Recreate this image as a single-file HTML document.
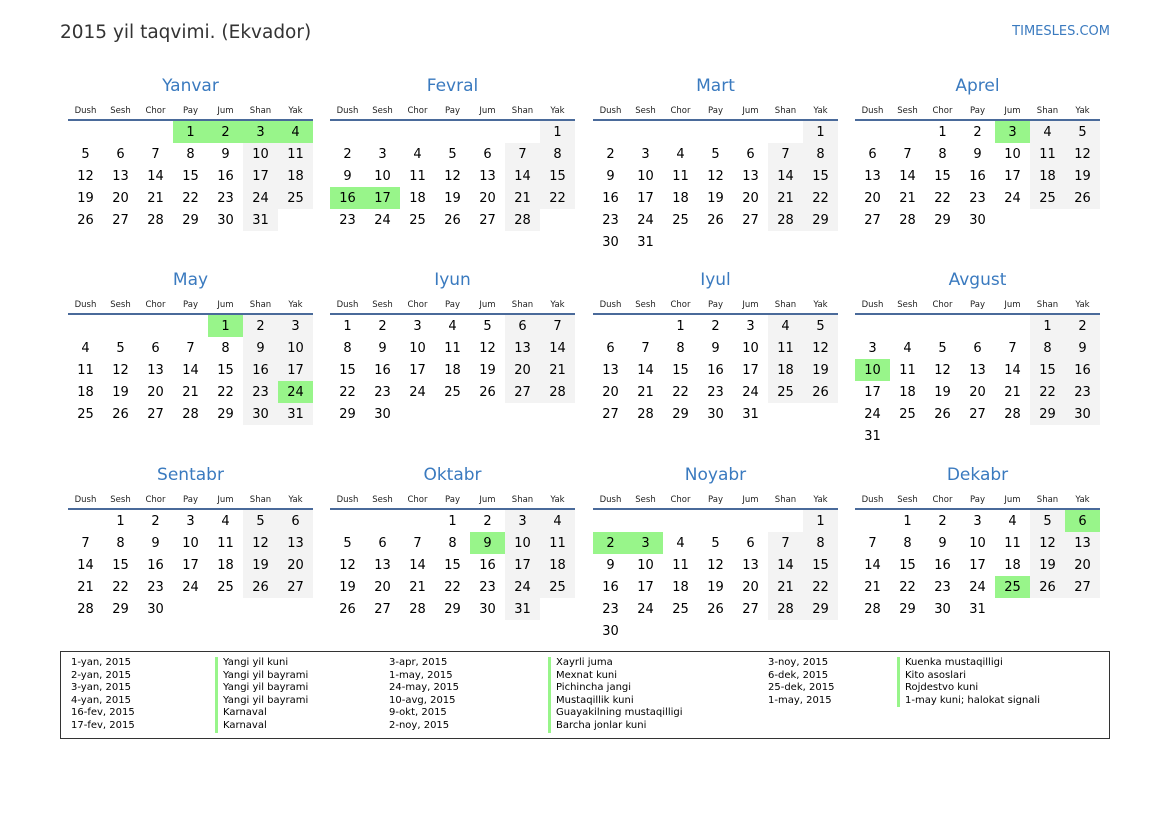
<!DOCTYPE html>
<html><head><meta charset="utf-8">
<style>
body{margin:0;width:1169px;height:827px;background:#fff;position:relative;font-family:"DejaVu Sans","Liberation Sans",sans-serif;color:#000;overflow:hidden}
.hdr{position:absolute;left:60px;top:20px;font-size:18.5px;color:#333;line-height:26px}
.site{position:absolute;right:59px;top:23px;font-size:13px;color:#3a7abf;line-height:18px}
.m{position:absolute;width:245px}
.t{height:20px;line-height:20px;text-align:center;font-size:17px;color:#3a7abf;margin-top:1px}
.d{position:absolute;top:29px;left:0;width:245px;display:flex;font-size:8.5px;line-height:14px;color:#222}
.d span{width:35px;text-align:center}
.ln{position:absolute;top:44px;left:0;width:245px;height:2px;background:#4a6a9a}
table{position:absolute;top:46px;left:0;border-collapse:collapse}
td{width:35px;height:20px;padding:2px 0 0 0;text-align:center;font-size:13px;line-height:20px}
td:nth-child(6):not(:empty),td:nth-child(7):not(:empty){background:#f3f3f3}
td.h,td.h:not(:empty){background:#98f58a}
.lg{position:absolute;left:60px;top:651px;width:1048px;height:86px;border:1px solid #333}
.c{position:absolute;top:5px;font-size:10px;line-height:12.6px;white-space:nowrap}
.b{border-left:3px solid #98f58a;padding-left:5px}
</style></head><body>
<div class="hdr">2015 yil taqvimi. (Ekvador)</div>
<div class="site">TIMESLES.COM</div>

<div class="m" style="left:68px;top:75px"><div class="t">Yanvar</div><div class="d"><span>Dush</span><span>Sesh</span><span>Chor</span><span>Pay</span><span>Jum</span><span>Shan</span><span>Yak</span></div><div class="ln"></div>
<table><tr><td></td><td></td><td></td><td class="h">1</td><td class="h">2</td><td class="h">3</td><td class="h">4</td></tr>
<tr><td>5</td><td>6</td><td>7</td><td>8</td><td>9</td><td>10</td><td>11</td></tr>
<tr><td>12</td><td>13</td><td>14</td><td>15</td><td>16</td><td>17</td><td>18</td></tr>
<tr><td>19</td><td>20</td><td>21</td><td>22</td><td>23</td><td>24</td><td>25</td></tr>
<tr><td>26</td><td>27</td><td>28</td><td>29</td><td>30</td><td>31</td><td></td></tr></table></div>

<div class="m" style="left:330px;top:75px"><div class="t">Fevral</div><div class="d"><span>Dush</span><span>Sesh</span><span>Chor</span><span>Pay</span><span>Jum</span><span>Shan</span><span>Yak</span></div><div class="ln"></div>
<table><tr><td></td><td></td><td></td><td></td><td></td><td></td><td>1</td></tr>
<tr><td>2</td><td>3</td><td>4</td><td>5</td><td>6</td><td>7</td><td>8</td></tr>
<tr><td>9</td><td>10</td><td>11</td><td>12</td><td>13</td><td>14</td><td>15</td></tr>
<tr><td class="h">16</td><td class="h">17</td><td>18</td><td>19</td><td>20</td><td>21</td><td>22</td></tr>
<tr><td>23</td><td>24</td><td>25</td><td>26</td><td>27</td><td>28</td><td></td></tr></table></div>

<div class="m" style="left:593px;top:75px"><div class="t">Mart</div><div class="d"><span>Dush</span><span>Sesh</span><span>Chor</span><span>Pay</span><span>Jum</span><span>Shan</span><span>Yak</span></div><div class="ln"></div>
<table><tr><td></td><td></td><td></td><td></td><td></td><td></td><td>1</td></tr>
<tr><td>2</td><td>3</td><td>4</td><td>5</td><td>6</td><td>7</td><td>8</td></tr>
<tr><td>9</td><td>10</td><td>11</td><td>12</td><td>13</td><td>14</td><td>15</td></tr>
<tr><td>16</td><td>17</td><td>18</td><td>19</td><td>20</td><td>21</td><td>22</td></tr>
<tr><td>23</td><td>24</td><td>25</td><td>26</td><td>27</td><td>28</td><td>29</td></tr>
<tr><td>30</td><td>31</td><td></td><td></td><td></td><td></td><td></td></tr></table></div>

<div class="m" style="left:855px;top:75px"><div class="t">Aprel</div><div class="d"><span>Dush</span><span>Sesh</span><span>Chor</span><span>Pay</span><span>Jum</span><span>Shan</span><span>Yak</span></div><div class="ln"></div>
<table><tr><td></td><td></td><td>1</td><td>2</td><td class="h">3</td><td>4</td><td>5</td></tr>
<tr><td>6</td><td>7</td><td>8</td><td>9</td><td>10</td><td>11</td><td>12</td></tr>
<tr><td>13</td><td>14</td><td>15</td><td>16</td><td>17</td><td>18</td><td>19</td></tr>
<tr><td>20</td><td>21</td><td>22</td><td>23</td><td>24</td><td>25</td><td>26</td></tr>
<tr><td>27</td><td>28</td><td>29</td><td>30</td><td></td><td></td><td></td></tr></table></div>

<div class="m" style="left:68px;top:269px"><div class="t">May</div><div class="d"><span>Dush</span><span>Sesh</span><span>Chor</span><span>Pay</span><span>Jum</span><span>Shan</span><span>Yak</span></div><div class="ln"></div>
<table><tr><td></td><td></td><td></td><td></td><td class="h">1</td><td>2</td><td>3</td></tr>
<tr><td>4</td><td>5</td><td>6</td><td>7</td><td>8</td><td>9</td><td>10</td></tr>
<tr><td>11</td><td>12</td><td>13</td><td>14</td><td>15</td><td>16</td><td>17</td></tr>
<tr><td>18</td><td>19</td><td>20</td><td>21</td><td>22</td><td>23</td><td class="h">24</td></tr>
<tr><td>25</td><td>26</td><td>27</td><td>28</td><td>29</td><td>30</td><td>31</td></tr></table></div>

<div class="m" style="left:330px;top:269px"><div class="t">Iyun</div><div class="d"><span>Dush</span><span>Sesh</span><span>Chor</span><span>Pay</span><span>Jum</span><span>Shan</span><span>Yak</span></div><div class="ln"></div>
<table><tr><td>1</td><td>2</td><td>3</td><td>4</td><td>5</td><td>6</td><td>7</td></tr>
<tr><td>8</td><td>9</td><td>10</td><td>11</td><td>12</td><td>13</td><td>14</td></tr>
<tr><td>15</td><td>16</td><td>17</td><td>18</td><td>19</td><td>20</td><td>21</td></tr>
<tr><td>22</td><td>23</td><td>24</td><td>25</td><td>26</td><td>27</td><td>28</td></tr>
<tr><td>29</td><td>30</td><td></td><td></td><td></td><td></td><td></td></tr></table></div>

<div class="m" style="left:593px;top:269px"><div class="t">Iyul</div><div class="d"><span>Dush</span><span>Sesh</span><span>Chor</span><span>Pay</span><span>Jum</span><span>Shan</span><span>Yak</span></div><div class="ln"></div>
<table><tr><td></td><td></td><td>1</td><td>2</td><td>3</td><td>4</td><td>5</td></tr>
<tr><td>6</td><td>7</td><td>8</td><td>9</td><td>10</td><td>11</td><td>12</td></tr>
<tr><td>13</td><td>14</td><td>15</td><td>16</td><td>17</td><td>18</td><td>19</td></tr>
<tr><td>20</td><td>21</td><td>22</td><td>23</td><td>24</td><td>25</td><td>26</td></tr>
<tr><td>27</td><td>28</td><td>29</td><td>30</td><td>31</td><td></td><td></td></tr></table></div>

<div class="m" style="left:855px;top:269px"><div class="t">Avgust</div><div class="d"><span>Dush</span><span>Sesh</span><span>Chor</span><span>Pay</span><span>Jum</span><span>Shan</span><span>Yak</span></div><div class="ln"></div>
<table><tr><td></td><td></td><td></td><td></td><td></td><td>1</td><td>2</td></tr>
<tr><td>3</td><td>4</td><td>5</td><td>6</td><td>7</td><td>8</td><td>9</td></tr>
<tr><td class="h">10</td><td>11</td><td>12</td><td>13</td><td>14</td><td>15</td><td>16</td></tr>
<tr><td>17</td><td>18</td><td>19</td><td>20</td><td>21</td><td>22</td><td>23</td></tr>
<tr><td>24</td><td>25</td><td>26</td><td>27</td><td>28</td><td>29</td><td>30</td></tr>
<tr><td>31</td><td></td><td></td><td></td><td></td><td></td><td></td></tr></table></div>

<div class="m" style="left:68px;top:464px"><div class="t">Sentabr</div><div class="d"><span>Dush</span><span>Sesh</span><span>Chor</span><span>Pay</span><span>Jum</span><span>Shan</span><span>Yak</span></div><div class="ln"></div>
<table><tr><td></td><td>1</td><td>2</td><td>3</td><td>4</td><td>5</td><td>6</td></tr>
<tr><td>7</td><td>8</td><td>9</td><td>10</td><td>11</td><td>12</td><td>13</td></tr>
<tr><td>14</td><td>15</td><td>16</td><td>17</td><td>18</td><td>19</td><td>20</td></tr>
<tr><td>21</td><td>22</td><td>23</td><td>24</td><td>25</td><td>26</td><td>27</td></tr>
<tr><td>28</td><td>29</td><td>30</td><td></td><td></td><td></td><td></td></tr></table></div>

<div class="m" style="left:330px;top:464px"><div class="t">Oktabr</div><div class="d"><span>Dush</span><span>Sesh</span><span>Chor</span><span>Pay</span><span>Jum</span><span>Shan</span><span>Yak</span></div><div class="ln"></div>
<table><tr><td></td><td></td><td></td><td>1</td><td>2</td><td>3</td><td>4</td></tr>
<tr><td>5</td><td>6</td><td>7</td><td>8</td><td class="h">9</td><td>10</td><td>11</td></tr>
<tr><td>12</td><td>13</td><td>14</td><td>15</td><td>16</td><td>17</td><td>18</td></tr>
<tr><td>19</td><td>20</td><td>21</td><td>22</td><td>23</td><td>24</td><td>25</td></tr>
<tr><td>26</td><td>27</td><td>28</td><td>29</td><td>30</td><td>31</td><td></td></tr></table></div>

<div class="m" style="left:593px;top:464px"><div class="t">Noyabr</div><div class="d"><span>Dush</span><span>Sesh</span><span>Chor</span><span>Pay</span><span>Jum</span><span>Shan</span><span>Yak</span></div><div class="ln"></div>
<table><tr><td></td><td></td><td></td><td></td><td></td><td></td><td>1</td></tr>
<tr><td class="h">2</td><td class="h">3</td><td>4</td><td>5</td><td>6</td><td>7</td><td>8</td></tr>
<tr><td>9</td><td>10</td><td>11</td><td>12</td><td>13</td><td>14</td><td>15</td></tr>
<tr><td>16</td><td>17</td><td>18</td><td>19</td><td>20</td><td>21</td><td>22</td></tr>
<tr><td>23</td><td>24</td><td>25</td><td>26</td><td>27</td><td>28</td><td>29</td></tr>
<tr><td>30</td><td></td><td></td><td></td><td></td><td></td><td></td></tr></table></div>

<div class="m" style="left:855px;top:464px"><div class="t">Dekabr</div><div class="d"><span>Dush</span><span>Sesh</span><span>Chor</span><span>Pay</span><span>Jum</span><span>Shan</span><span>Yak</span></div><div class="ln"></div>
<table><tr><td></td><td>1</td><td>2</td><td>3</td><td>4</td><td>5</td><td class="h">6</td></tr>
<tr><td>7</td><td>8</td><td>9</td><td>10</td><td>11</td><td>12</td><td>13</td></tr>
<tr><td>14</td><td>15</td><td>16</td><td>17</td><td>18</td><td>19</td><td>20</td></tr>
<tr><td>21</td><td>22</td><td>23</td><td>24</td><td class="h">25</td><td>26</td><td>27</td></tr>
<tr><td>28</td><td>29</td><td>30</td><td>31</td><td></td><td></td><td></td></tr></table></div>

<div class="lg">
<div class="c" style="left:10px">1-yan, 2015<br>2-yan, 2015<br>3-yan, 2015<br>4-yan, 2015<br>16-fev, 2015<br>17-fev, 2015</div>
<div class="c b" style="left:154px">Yangi yil kuni<br>Yangi yil bayrami<br>Yangi yil bayrami<br>Yangi yil bayrami<br>Karnaval<br>Karnaval</div>
<div class="c" style="left:328px">3-apr, 2015<br>1-may, 2015<br>24-may, 2015<br>10-avg, 2015<br>9-okt, 2015<br>2-noy, 2015</div>
<div class="c b" style="left:487px">Xayrli juma<br>Mexnat kuni<br>Pichincha jangi<br>Mustaqillik kuni<br>Guayakilning mustaqilligi<br>Barcha jonlar kuni</div>
<div class="c" style="left:707px">3-noy, 2015<br>6-dek, 2015<br>25-dek, 2015<br>1-may, 2015</div>
<div class="c b" style="left:836px">Kuenka mustaqilligi<br>Kito asoslari<br>Rojdestvo kuni<br>1-may kuni; halokat signali</div>
</div>
</body></html>
